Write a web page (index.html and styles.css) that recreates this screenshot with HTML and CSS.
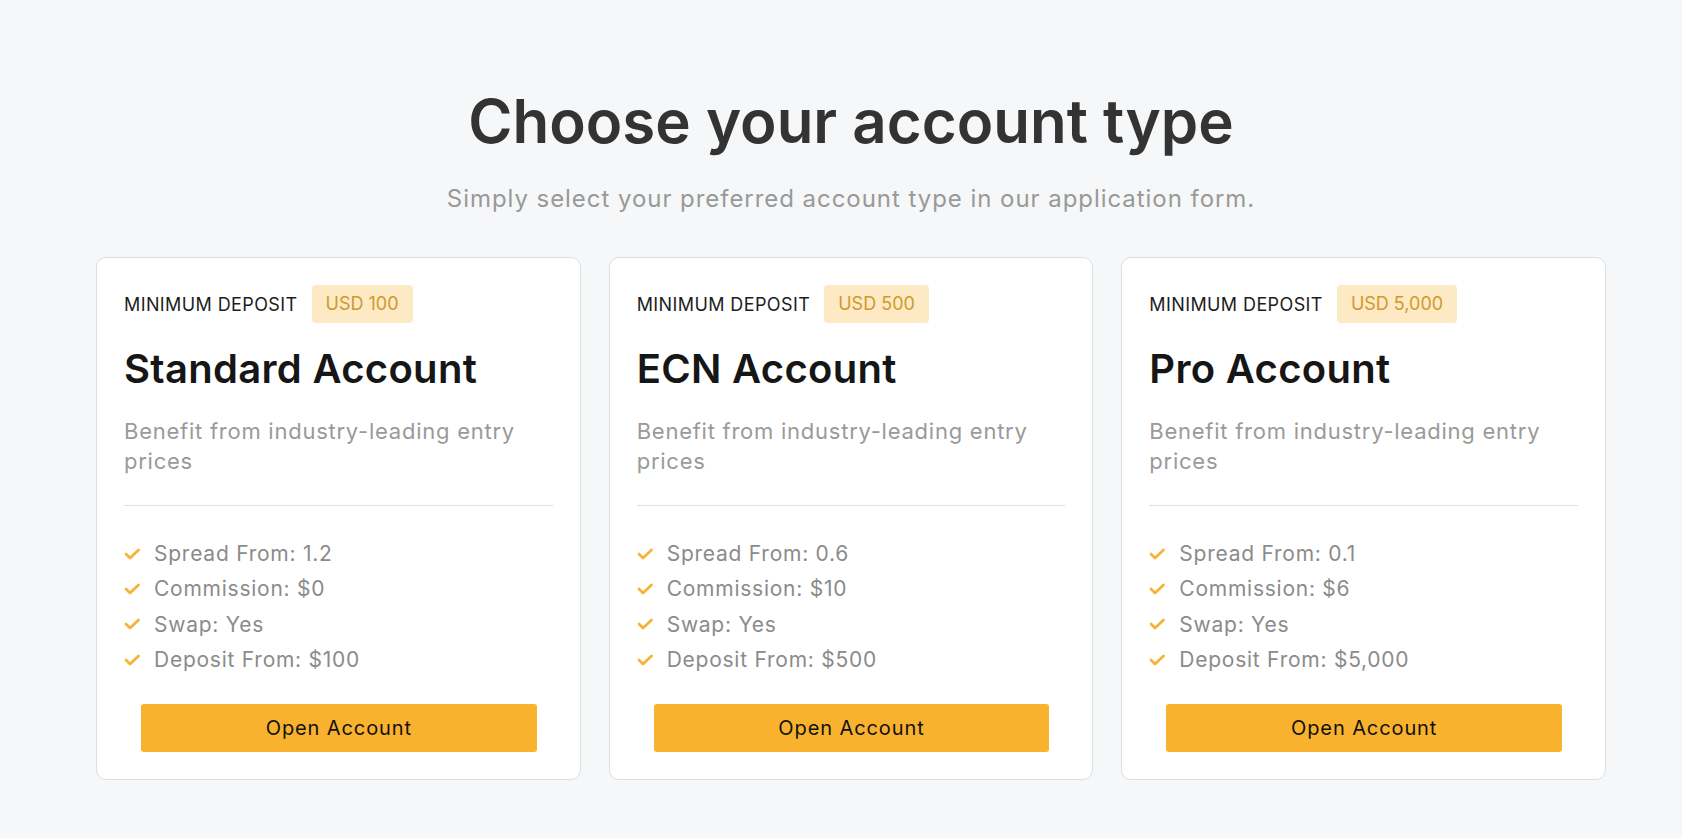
FILE: index.html
```html
<!DOCTYPE html>
<html lang="en">
<head>
<meta charset="utf-8">
<title>Choose your account type</title>
<link rel="stylesheet" href="styles.css">
</head>
<body>
<section class="accounts">
  <h1 class="accounts__title">Choose your account type</h1>
  <p class="accounts__subtitle">Simply select your preferred account type in our application form.</p>
  <div class="cards">
    <article class="card">
      <div class="card__deposit">
        <span class="card__label">MINIMUM DEPOSIT</span>
        <span class="card__badge">USD 100</span>
      </div>
      <h2 class="card__name">Standard Account</h2>
      <p class="card__desc">Benefit from industry-leading entry prices</p>
      <hr class="card__rule">
      <ul class="card__list">
        <li class="card__item"><svg class="check" viewBox="0 0 18 12"><polyline points="2,6 6,10 14.5,2"/></svg>Spread From: 1.2</li>
        <li class="card__item"><svg class="check" viewBox="0 0 18 12"><polyline points="2,6 6,10 14.5,2"/></svg>Commission: $0</li>
        <li class="card__item"><svg class="check" viewBox="0 0 18 12"><polyline points="2,6 6,10 14.5,2"/></svg>Swap: Yes</li>
        <li class="card__item"><svg class="check" viewBox="0 0 18 12"><polyline points="2,6 6,10 14.5,2"/></svg>Deposit From: $100</li>
      </ul>
      <a class="card__btn" href="#">Open Account</a>
    </article>
    <article class="card">
      <div class="card__deposit">
        <span class="card__label">MINIMUM DEPOSIT</span>
        <span class="card__badge">USD 500</span>
      </div>
      <h2 class="card__name">ECN Account</h2>
      <p class="card__desc">Benefit from industry-leading entry prices</p>
      <hr class="card__rule">
      <ul class="card__list">
        <li class="card__item"><svg class="check" viewBox="0 0 18 12"><polyline points="2,6 6,10 14.5,2"/></svg>Spread From: 0.6</li>
        <li class="card__item"><svg class="check" viewBox="0 0 18 12"><polyline points="2,6 6,10 14.5,2"/></svg>Commission: $10</li>
        <li class="card__item"><svg class="check" viewBox="0 0 18 12"><polyline points="2,6 6,10 14.5,2"/></svg>Swap: Yes</li>
        <li class="card__item"><svg class="check" viewBox="0 0 18 12"><polyline points="2,6 6,10 14.5,2"/></svg>Deposit From: $500</li>
      </ul>
      <a class="card__btn" href="#">Open Account</a>
    </article>
    <article class="card">
      <div class="card__deposit">
        <span class="card__label">MINIMUM DEPOSIT</span>
        <span class="card__badge">USD 5,000</span>
      </div>
      <h2 class="card__name">Pro Account</h2>
      <p class="card__desc">Benefit from industry-leading entry prices</p>
      <hr class="card__rule">
      <ul class="card__list">
        <li class="card__item"><svg class="check" viewBox="0 0 18 12"><polyline points="2,6 6,10 14.5,2"/></svg>Spread From: 0.1</li>
        <li class="card__item"><svg class="check" viewBox="0 0 18 12"><polyline points="2,6 6,10 14.5,2"/></svg>Commission: $6</li>
        <li class="card__item"><svg class="check" viewBox="0 0 18 12"><polyline points="2,6 6,10 14.5,2"/></svg>Swap: Yes</li>
        <li class="card__item"><svg class="check" viewBox="0 0 18 12"><polyline points="2,6 6,10 14.5,2"/></svg>Deposit From: $5,000</li>
      </ul>
      <a class="card__btn" href="#">Open Account</a>
    </article>
  </div>
</section>
</body>
</html>
```
FILE: styles.css
```css
html, body {
  margin: 0;
  padding: 0;
}
body {
  background: #f5f7f8;
  font-family: Inter, "Open Sans", "Liberation Sans", sans-serif;
  color: #222;
  height: 838px;
  overflow: hidden;
}
.accounts {
  width: 1510px;
  margin-left: 96px;
  padding-top: 85px;
}
.accounts__title {
  margin: 0;
  text-align: center;
  font-size: 60px;
  line-height: 72px;
  font-weight: 600;
  color: #333;
}
.accounts__subtitle {
  margin: 27px 0 0;
  text-align: center;
  font-size: 24px;
  line-height: 30px;
  letter-spacing: 0.95px;
  color: #999;
}
.cards {
  margin-top: 43px;
  display: grid;
  grid-template-columns: repeat(3, 1fr);
  gap: 28px;
}
.card {
  background: #fff;
  border: 1px solid #dcdfe2;
  border-radius: 10px;
  padding: 27px;
  display: flex;
  flex-direction: column;
}
.card__deposit {
  display: flex;
  align-items: center;
  gap: 14px;
  height: 38px;
}
.card__label {
  font-size: 18px;
  letter-spacing: 0.4px;
  color: #1d1d1d;
}
.card__badge {
  background: #fde9c3;
  color: #cf9a2c;
  border-radius: 4px;
  height: 38px;
  line-height: 38px;
  padding: 0 14px;
  font-size: 18px;
}
.card__name {
  margin: 22px 0 0;
  font-size: 40px;
  line-height: 48px;
  font-weight: 600;
  letter-spacing: 0.3px;
  color: #161616;
}
.card__desc {
  margin: 23px 0 0;
  font-size: 22px;
  line-height: 30px;
  letter-spacing: 0.75px;
  color: #9a9a9a;
}
.card__rule {
  margin: 29px 0 0;
  border: 0;
  border-top: 1px solid #dedfe1;
  height: 0;
}
.card__list {
  list-style: none;
  margin: 30px 0 0;
  padding: 0;
}
.card__item {
  display: flex;
  align-items: center;
  font-size: 21px;
  line-height: 35.3px;
  letter-spacing: 0.75px;
  color: #8b8b8b;
}
.check {
  width: 18px;
  height: 12px;
  margin-right: 12px;
  flex: none;
}
.check polyline {
  fill: none;
  stroke: #f6b336;
  stroke-width: 2.8;
  stroke-linecap: round;
  stroke-linejoin: round;
}
.card__btn {
  margin: 27px 16px 0 17px;
  height: 48px;
  display: flex;
  align-items: center;
  justify-content: center;
  background: #f9b22e;
  border-radius: 3px;
  color: #111;
  font-size: 20px;
  letter-spacing: 0.9px;
  text-decoration: none;
}
```
